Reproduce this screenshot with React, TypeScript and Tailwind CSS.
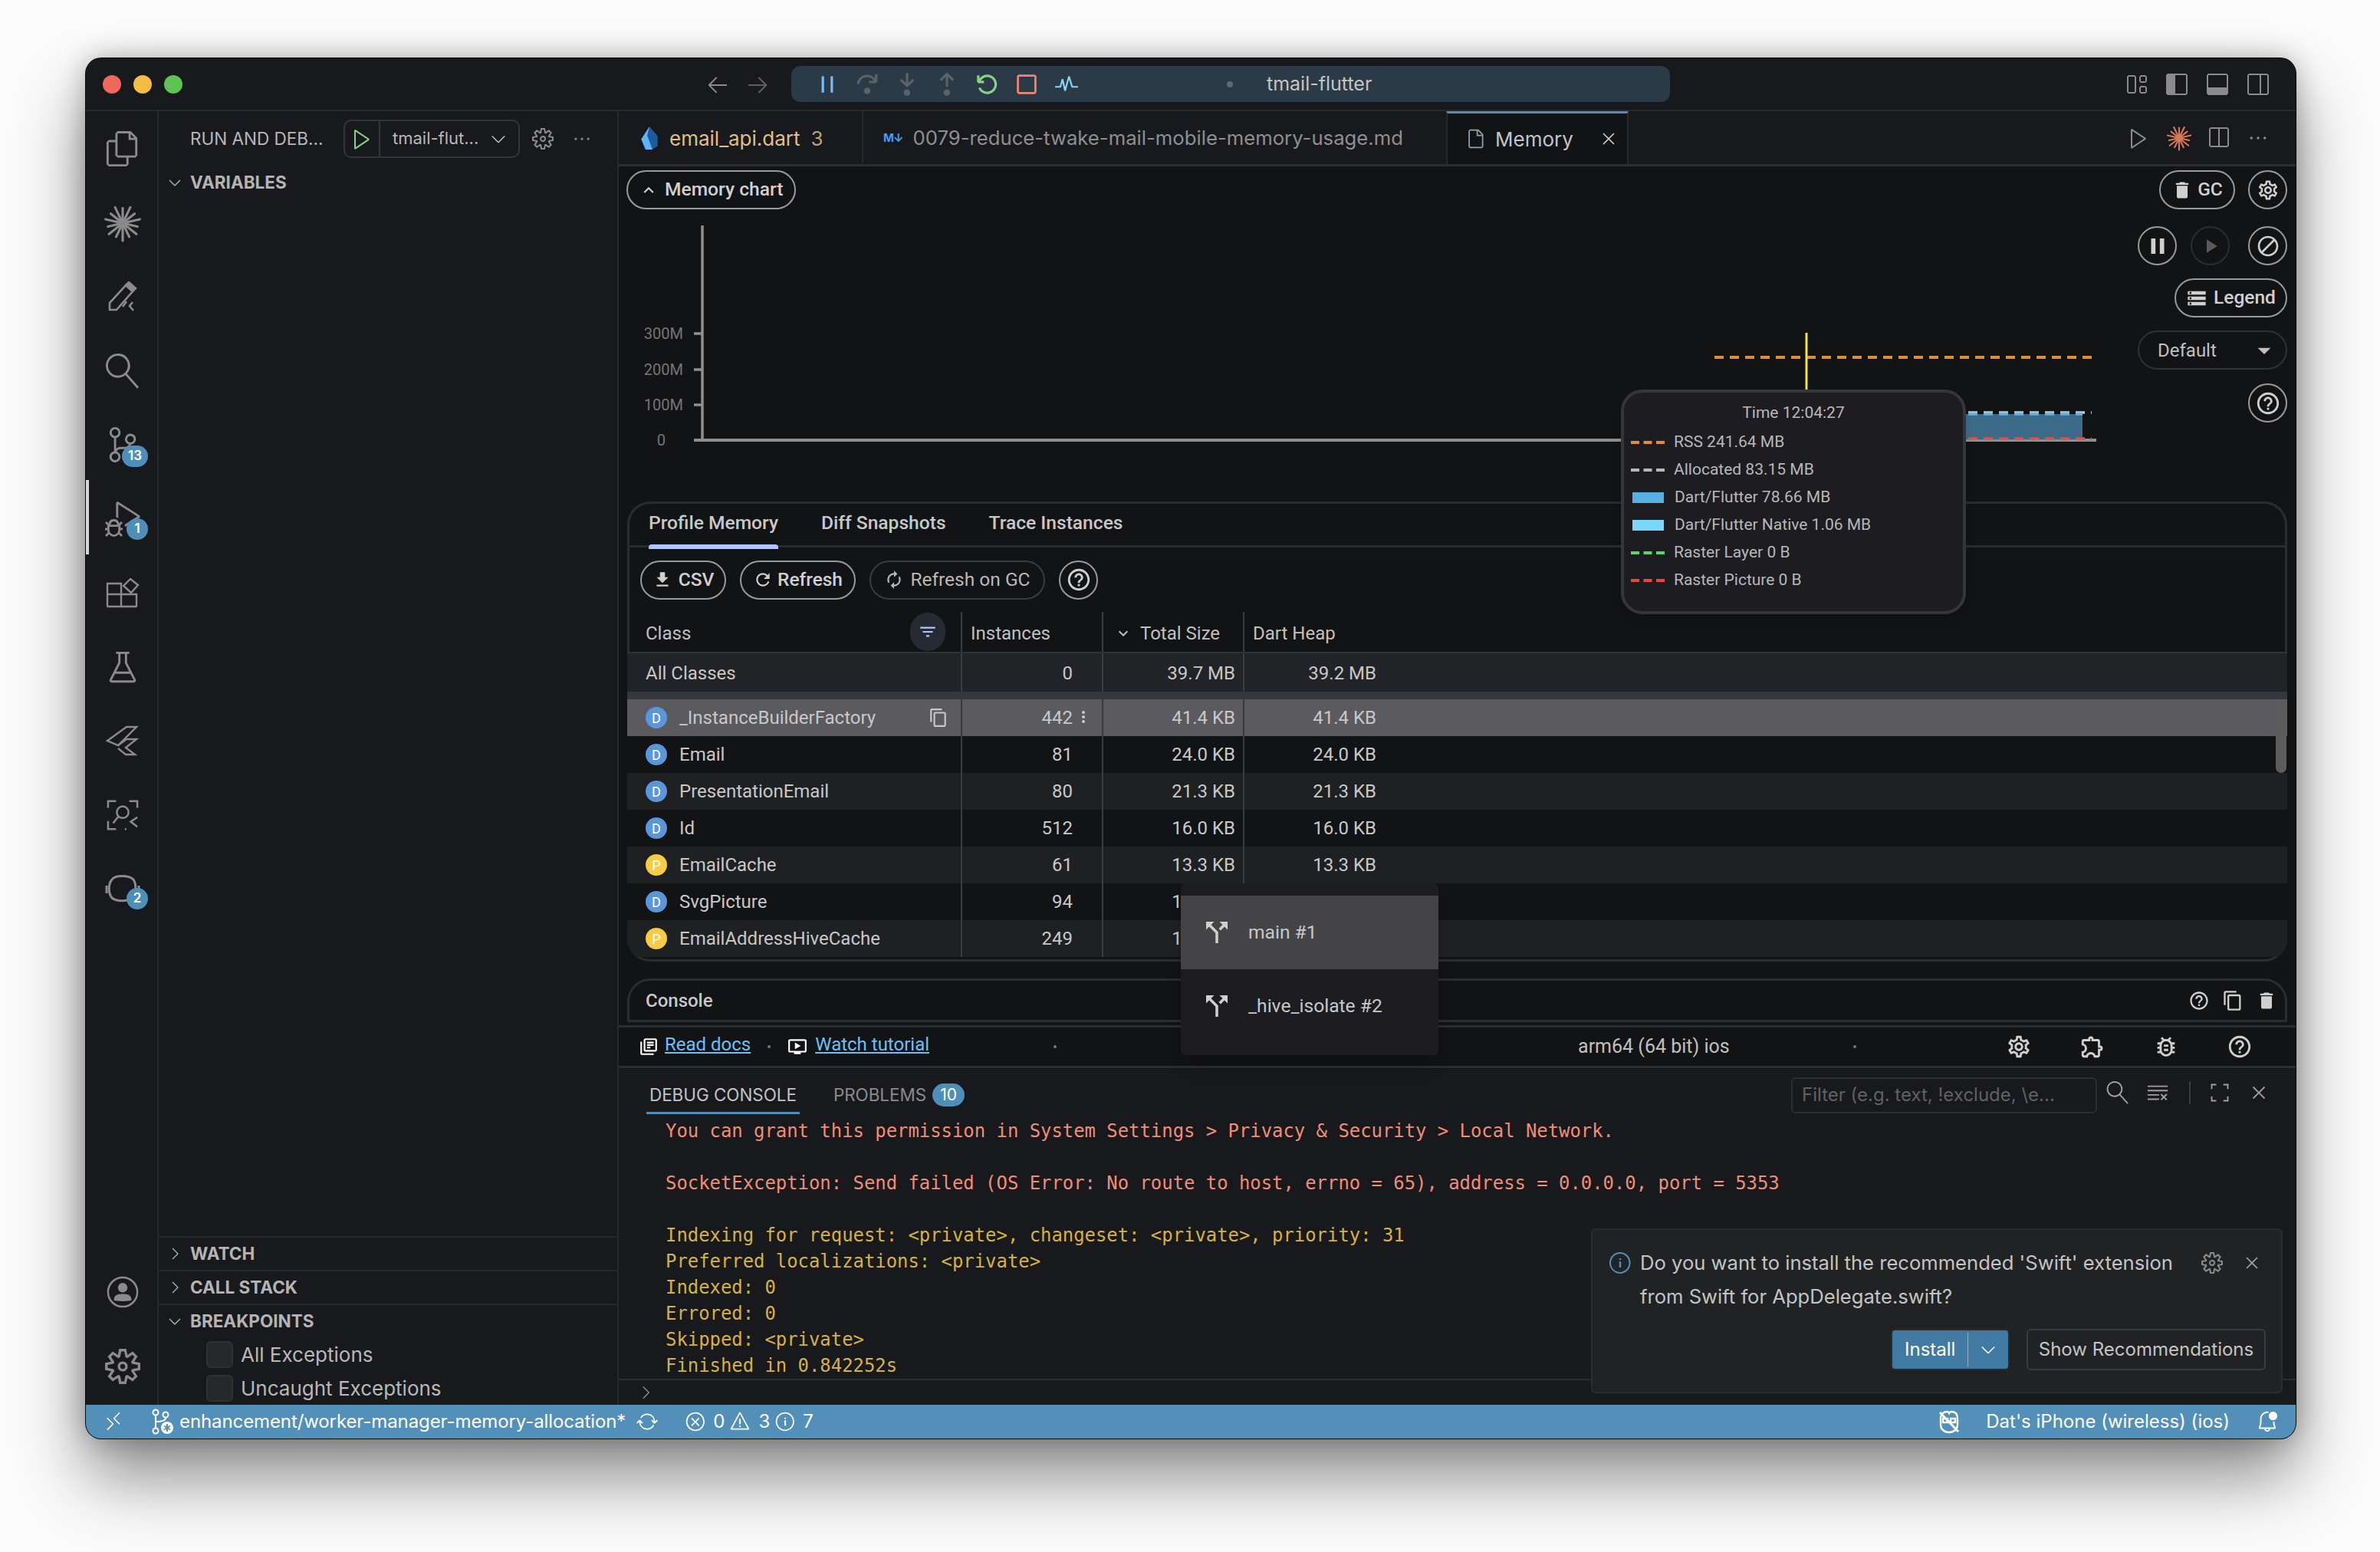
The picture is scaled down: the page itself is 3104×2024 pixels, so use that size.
import type { ReactNode } from 'react'
import {
  VscArrowLeft,
  VscArrowRight,
  VscBeaker,
  VscBellDot,
  VscChevronDown,
  VscChevronRight,
  VscClearAll,
  VscClose,
  VscDebugPause,
  VscDebugRestart,
  VscDebugStepInto,
  VscDebugStepOut,
  VscDebugStepOver,
  VscDebugStop,
  VscEllipsis,
  VscError,
  VscFile,
  VscFiles,
  VscInfo,
  VscLayout,
  VscLayoutPanel,
  VscLayoutSidebarLeft,
  VscLayoutSidebarRightOff,
  VscPlay,
  VscPulse,
  VscRemote,
  VscSearch,
  VscSettingsGear,
  VscSourceControl,
  VscSplitHorizontal,
  VscSync,
  VscWarning,
  VscDebugAlt,
} from 'react-icons/vsc'
import {
  MdArrowDropDown,
  MdAutorenew,
  MdBlock,
  MdCallSplit,
  MdContentCopy,
  MdDelete,
  MdFileDownload,
  MdFilterList,
  MdHelpOutline,
  MdKeyboardArrowDown,
  MdKeyboardArrowUp,
  MdMoreVert,
  MdOutlineBugReport,
  MdOutlineExtension,
  MdOutlineLibraryBooks,
  MdOutlineOndemandVideo,
  MdOutlineSettings,
  MdPause,
  MdPlayArrow,
  MdRefresh,
  MdStorage,
} from 'react-icons/md'

function Sparkle({ className }: { className?: string }) {
  const rays = Array.from({ length: 14 }, (_, i) => (i * 360) / 14)
  return (
    <svg viewBox="0 0 48 48" className={className}>
      {rays.map((deg, i) => (
        <line
          key={deg}
          x1="24"
          y1="24"
          x2="24"
          y2={i % 2 ? 2 : 5}
          stroke="currentColor"
          strokeWidth="3"
          strokeLinecap="round"
          transform={`rotate(${deg} 24 24)`}
        />
      ))}
    </svg>
  )
}

function DartLogo() {
  return (
    <svg viewBox="0 0 24 32" className="h-[31px] w-[24px]">
      <path d="M12 0 L23 13 L23 26 L16 31 L6 31 L1 17 Z" fill="#1f5a9e" />
      <path d="M1 17 L12 0 L9 12 L16 31 L7 31 Z" fill="#62b5f5" />
    </svg>
  )
}

function PencilRules() {
  return (
    <svg viewBox="0 0 40 40" className="h-[40px] w-[40px] text-[#8b8b8b]" fill="none" stroke="currentColor" strokeWidth="2.6">
      <path d="M3 37 L3 28 L24 5 L33 13 L12 37 Z" />
      <path d="M28 1 L37 9 L33 13 L24 5 Z" fill="currentColor" />
      <path d="M25 26 L20 33 M33 27 L29 32 L34 38" />
    </svg>
  )
}

function FlutterOutline() {
  return (
    <svg viewBox="0 0 44 40" className="h-[40px] w-[44px] text-[#8b8b8b]" fill="none" stroke="currentColor" strokeWidth="2.4">
      <path d="M2 20 L27 2 L40 2 L16 26 Z" />
      <path d="M16 26 L27 18 L40 18 L26 29 L38 38 L26 38 L16 30" />
    </svg>
  )
}

function ScanFace() {
  return (
    <svg viewBox="0 0 44 44" className="h-[42px] w-[42px] text-[#8b8b8b]" fill="none" stroke="currentColor" strokeWidth="2.6">
      <path d="M2 12 V3 H13 M31 3 H42 V12 M2 30 V41 H13 M25 41 H27" />
      <circle cx="22" cy="18" r="8" />
      <path d="M16 24 L9 33 M42 25 L33 31 L42 38" />
    </svg>
  )
}

function ChatIcon() {
  return (
    <svg viewBox="0 0 48 40" className="h-[40px] w-[48px] text-[#8b8b8b]" fill="none" stroke="currentColor" strokeWidth="3">
      <path d="M10 8 C14 2 32 2 38 8 C42 14 42 26 36 32 C30 37 16 37 10 32 C5 26 5 14 10 8 Z" />
      <path d="M3 16 V26 M45 16 V26" />
    </svg>
  )
}

function ExtensionsIcon() {
  return (
    <svg viewBox="0 0 44 40" className="h-[40px] w-[44px] text-[#8b8b8b]" fill="none" stroke="currentColor" strokeWidth="2.4">
      <path d="M2 8 H20 V38 H3 a1 1 0 0 1 -1 -1 Z" />
      <path d="M2 22 H40 V37 a1 1 0 0 1 -1 1 H20" />
      <path d="M32 2 L42 10 L33 20 L23 11 Z" />
    </svg>
  )
}

function AccountIcon() {
  return (
    <svg viewBox="0 0 44 44" className="h-[42px] w-[42px] text-[#8b8b8b]">
      <circle cx="22" cy="22" r="20" fill="none" stroke="currentColor" strokeWidth="2.6" />
      <circle cx="22" cy="16" r="6.5" fill="currentColor" />
      <path d="M10 33 C10 25 16 24.5 22 24.5 C28 24.5 34 25 34 33 C30 35 14 35 10 33 Z" fill="currentColor" />
    </svg>
  )
}

function BranchStar() {
  return (
    <svg viewBox="0 0 30 34" className="h-[34px] w-[30px] text-white" fill="none" stroke="currentColor" strokeWidth="2">
      <circle cx="6" cy="5" r="3.5" />
      <circle cx="6" cy="29" r="3.5" />
      <path d="M6 9 V25 M6 17 C12 17 19 16 19 12" />
      <circle cx="19" cy="8" r="3.5" />
      <circle cx="21" cy="25" r="8" fill="currentColor" stroke="none" />
      <path d="M21 20 V30 M17 22.5 L25 27.5 M25 22.5 L17 27.5" stroke="#528fb9" />
    </svg>
  )
}

function CopilotOff() {
  return (
    <svg viewBox="0 0 32 32" className="h-[32px] w-[32px] text-white" fill="none" stroke="currentColor" strokeWidth="2.4">
      <path d="M5 20 V12 C5 6 9 3 13 3 C15 3 16 5 16 5 C16 5 17 3 19 3 C24 3 27 6 27 12 V20 C27 26 22 30 16 30 C10 30 5 26 5 20 Z" />
      <path d="M8 12 H14 V17 H8 Z M18 12 H24 V17 H18 Z" />
      <path d="M4 4 L28 29" strokeWidth="3" />
    </svg>
  )
}

function ExpandIcon() {
  return (
    <svg viewBox="0 0 24 24" className="ml-[24px] h-[28px] w-[28px] text-[#a0a0a0]" fill="none" stroke="currentColor" strokeWidth="1.6">
      <path d="M3 8 V3 H8 M16 3 H21 V8 M3 16 V21 H8 M16 21 H21 V16" />
    </svg>
  )
}

function ActivityItem({ children, badge, wide }: { children: ReactNode; badge?: string; wide?: boolean }) {
  return (
    <div className="relative flex h-[96.5px] w-full shrink-0 items-center justify-center">
      {children}
      {badge && (
        <span
          className={`absolute flex h-[28px] items-center justify-center rounded-full bg-[#4e8fb9] text-[17px] font-semibold text-white ${
            wide ? 'left-[44px] top-[49px] w-[34px]' : 'left-[50px] top-[47px] w-[28px]'
          }`}
        >
          {badge}
        </span>
      )}
    </div>
  )
}

function ActivityBar() {
  const icon = 'h-[46px] w-[46px] text-[#8b8b8b]'
  return (
    <aside className="relative flex w-[95px] shrink-0 flex-col border-r-2 border-[#26282b] pl-[3px] pt-px">
      <span className="absolute left-0 top-[481px] h-[97px] w-[4px] bg-[#d8d8d8]" />
      <ActivityItem><VscFiles className={icon} /></ActivityItem>
      <ActivityItem><Sparkle className="h-[50px] w-[50px] text-[#8b8b8b]" /></ActivityItem>
      <ActivityItem><PencilRules /></ActivityItem>
      <ActivityItem><VscSearch className={`${icon} -scale-x-100`} /></ActivityItem>
      <ActivityItem badge="13" wide><VscSourceControl className={icon} /></ActivityItem>
      <ActivityItem badge="1"><VscDebugAlt className={icon} /></ActivityItem>
      <ActivityItem><ExtensionsIcon /></ActivityItem>
      <ActivityItem><VscBeaker className={icon} /></ActivityItem>
      <ActivityItem><FlutterOutline /></ActivityItem>
      <ActivityItem><ScanFace /></ActivityItem>
      <ActivityItem badge="2"><ChatIcon /></ActivityItem>
      <div className="mt-auto flex flex-col pb-[2px]">
        <ActivityItem><AccountIcon /></ActivityItem>
        <ActivityItem><VscSettingsGear className={icon} /></ActivityItem>
      </div>
    </aside>
  )
}

function SectionHeader({ label, open, border = true }: { label: string; open?: boolean; border?: boolean }) {
  return (
    <div className={`flex h-[44px] items-center text-[22.5px] font-bold text-[#b4b4b4] ${border ? 'border-t-2 border-[#26282b]' : ''}`}>
      <span className="flex w-[41px] justify-center">
        {open ? <VscChevronDown className="h-[24px] w-[24px]" /> : <VscChevronRight className="h-[24px] w-[24px]" />}
      </span>
      {label}
    </div>
  )
}

function SideBar() {
  return (
    <section className="flex w-[600px] shrink-0 flex-col border-r-2 border-[#26282b] text-[#b8b8b8]">
      <div className="flex h-[71px] items-center pl-[41px] text-[22.5px]">
        <span className="w-[200px] whitespace-nowrap">RUN AND DEB...</span>
        <div className="flex h-[50px] w-[230px] shrink-0 items-center rounded-[10px] border-2 border-[#333539]">
          <span className="flex h-full w-[46px] shrink-0 items-center justify-center border-r-2 border-[#333539]">
            <VscPlay className="h-[32px] w-[32px] text-[#89d185]" />
          </span>
          <span className="whitespace-nowrap pl-[16px] text-[22px]">tmail-flut...</span>
          <VscChevronDown className="ml-auto mr-[12px] h-[28px] w-[28px] shrink-0 text-[#c0c0c0]" />
        </div>
        <VscSettingsGear className="ml-[16px] h-[28px] w-[28px] text-[#8b8b8b]" />
        <VscEllipsis className="ml-[24px] h-[26px] w-[26px] text-[#8b8b8b]" />
      </div>
      <SectionHeader label="VARIABLES" open border={false} />
      <div className="flex-1" />
      <SectionHeader label="WATCH" />
      <SectionHeader label="CALL STACK" />
      <SectionHeader label="BREAKPOINTS" open />
      {['All Exceptions', 'Uncaught Exceptions'].map(label => (
        <div key={label} className="flex h-[44px] items-center pl-[62px] text-[26px]">
          <span className="mr-[10px] h-[35px] w-[35px] rounded-[6px] border-2 border-[#2f3134] bg-[#26282b]" />
          {label}
        </div>
      ))}
    </section>
  )
}

function TitleBar() {
  return (
    <header className="flex h-[69px] shrink-0 items-center border-b-2 border-[#26282b] pl-[22px]">
      <span className="h-[24px] w-[24px] rounded-full bg-[#f0685c]" />
      <span className="ml-[16px] h-[24px] w-[24px] rounded-full bg-[#f6bd46]" />
      <span className="ml-[16px] h-[24px] w-[24px] rounded-full bg-[#5ec454]" />
      <VscArrowLeft className="ml-[682px] h-[32px] w-[32px] text-[#8b8b8b]" />
      <VscArrowRight className="ml-[20px] h-[32px] w-[32px] text-[#5f5f5f]" />
      <div className="ml-[28px] flex h-[47px] w-[1146px] items-center rounded-[12px] bg-[#2a3a46] pl-[30px] text-[25px] text-[#c4c4c4]">
        <VscDebugPause className="h-[34px] w-[34px] text-[#75beff]" />
        <VscDebugStepOver className="ml-[18px] h-[34px] w-[34px] text-[#5c6266]" />
        <VscDebugStepInto className="ml-[18px] h-[34px] w-[34px] text-[#5c6266]" />
        <VscDebugStepOut className="ml-[18px] h-[34px] w-[34px] text-[#5c6266]" />
        <VscDebugRestart className="ml-[18px] h-[34px] w-[34px] text-[#89d185]" />
        <VscDebugStop className="ml-[18px] h-[34px] w-[34px] text-[#f48771]" />
        <VscPulse className="ml-[18px] h-[34px] w-[34px] text-[#8ad8f8]" />
        <span className="ml-[192px] h-[8px] w-[8px] rounded-full bg-[#5e6b75]" />
        <span className="ml-[44px]">tmail-flutter</span>
      </div>
      <VscLayout className="ml-auto h-[32px] w-[32px] text-[#8b8b8b]" />
      <VscLayoutSidebarLeft className="ml-[21px] h-[32px] w-[32px] text-[#8b8b8b]" />
      <VscLayoutPanel className="ml-[21px] h-[32px] w-[32px] text-[#8b8b8b]" />
      <VscLayoutSidebarRightOff className="ml-[21px] mr-[33px] h-[32px] w-[32px] text-[#8b8b8b]" />
    </header>
  )
}

function EditorTabs() {
  return (
    <div className="flex h-[72px] shrink-0 border-b-[3px] border-[#2b2d30] text-[26px]">
      <div className="flex w-[319px] items-center gap-[14px] border-r-2 border-[#26282b] pl-[28px] pt-[2px] text-[#e2bf85]">
        <DartLogo />
        <span>email_api.dart</span>
        <span className="text-[#bfa274]">3</span>
      </div>
      <div className="flex w-[760px] items-center gap-[10px] pl-[26px] pt-[2px] text-[#8f8f8f]">
        <span className="text-[15px] font-bold tracking-[-1px] text-[#4a9af0]">M↓</span>
        <span className="ml-[3px] text-[25.7px]">0079-reduce-twake-mail-mobile-memory-usage.md</span>
      </div>
      <div className="flex w-[238px] items-center border-x-2 border-t-[3px] border-x-[#26282b] border-t-[#4e8fb9] bg-[#121315] pl-[22px] text-[#c4c4c4]">
        <VscFile className="h-[28px] w-[28px] text-[#8ea3b0]" />
        <span className="ml-[12px]">Memory</span>
        <VscClose className="ml-auto mr-[10px] h-[28px] w-[28px]" />
      </div>
      <div className="ml-auto flex items-center pr-[35px] text-[#8b8b8b]">
        <VscPlay className="h-[32px] w-[32px]" />
        <Sparkle className="ml-[20px] h-[34px] w-[34px] text-[#d97757]" />
        <VscSplitHorizontal className="ml-[18px] h-[32px] w-[32px]" />
        <VscEllipsis className="ml-[22px] h-[28px] w-[28px]" />
      </div>
    </div>
  )
}

function CircleButton({ children, dim }: { children: ReactNode; dim?: boolean }) {
  return (
    <span className={`flex h-[51px] w-[51px] items-center justify-center rounded-full border-2 ${dim ? 'border-[#2b2d30] text-[#5a5a5a]' : 'border-[#9a9a9a] text-[#cfcfcf]'}`}>
      {children}
    </span>
  )
}

function Pill({ children, className = '', dim }: { children: ReactNode; className?: string; dim?: boolean }) {
  return (
    <span className={`flex h-[51px] items-center justify-center rounded-full border-2 text-[24.5px] ${dim ? 'border-[#3a3c3f] text-[#b8b8b8]' : 'border-[#9a9a9a] font-medium text-[#d0d0d0]'} ${className}`}>
      {children}
    </span>
  )
}

function MemoryChart() {
  const dashes = (y: number, x1: number, x2: number, color: string, w = 3.5) => (
    <line x1={x1} x2={x2} y1={y} y2={y} stroke={color} strokeWidth={w} strokeDasharray="12 8" />
  )
  return (
    <svg width="1933" height="374" viewBox="0 0 1933 374" className="mt-[7px] block">
      {[['300M', 155], ['200M', 202], ['100M', 248], ['0', 294]].map(([t, y]) => (
        <g key={t}>
          <text x={t === '0' ? 61 : 84} y={Number(y) + 7} textAnchor="end" fontSize="20" fill="#757575">{t}</text>
          <line x1="98" x2="110" y1={y} y2={y} stroke="#8f8f8f" strokeWidth="3.5" />
        </g>
      ))}
      <line x1="109" x2="109" y1="14" y2="296" stroke="#8f8f8f" strokeWidth="3.5" />
      <line x1="98" x2="1927" y1="294" y2="294" stroke="#8f8f8f" strokeWidth="4" />
      <rect x="1700" y="260" width="209" height="33" fill="#3b6b87" />
      {dashes(258, 1700, 1921, '#c8c8c8')}
      {dashes(260, 1700, 1909, '#5bb3e3')}
      {dashes(292, 1700, 1921, '#e0504a')}
      {dashes(186, 1429, 1921, '#e88a2e', 4)}
      <line x1="1549" x2="1549" y1="154" y2="240" stroke="#f5e33c" strokeWidth="3" />
    </svg>
  )
}

function ChartTooltip() {
  const rows = [
    { label: 'RSS 241.64 MB', color: '#e88a2e' },
    { label: 'Allocated 83.15 MB', color: '#b8b8b8' },
    { label: 'Dart/Flutter 78.66 MB', color: '#57b0e2', bar: true },
    { label: 'Dart/Flutter Native 1.06 MB', color: '#7bd8fb', bar: true },
    { label: 'Raster Layer 0 B', color: '#5fd663' },
    { label: 'Raster Picture 0 B', color: '#e8483f' },
  ]
  return (
    <div className="absolute left-[1307px] top-[291px] h-[293px] w-[450px] rounded-[28px] border-4 border-[#35363a] bg-[#1c1c21] px-[9px] pt-[9px] text-[21px] text-[#b8b8b8] shadow-lg">
      <div className="mb-[2px] flex h-[36px] items-center justify-center">Time 12:04:27</div>
      {rows.map(row => (
        <div key={row.label} className="flex h-[36px] items-center">
          {row.bar ? (
            <span className="ml-[2px] mr-[14px] h-[14px] w-[41px]" style={{ backgroundColor: row.color }} />
          ) : (
            <svg width="44" height="6" className="mr-[12px]">
              <line x1="0" x2="44" y1="3" y2="3" stroke={row.color} strokeWidth="4" strokeDasharray="11 5.5" />
            </svg>
          )}
          {row.label}
        </div>
      ))}
    </div>
  )
}

const classRows = [
  { kind: 'D', name: '_InstanceBuilderFactory', count: '442', total: '41.4 KB', heap: '41.4 KB' },
  { kind: 'D', name: 'Email', count: '81', total: '24.0 KB', heap: '24.0 KB' },
  { kind: 'D', name: 'PresentationEmail', count: '80', total: '21.3 KB', heap: '21.3 KB' },
  { kind: 'D', name: 'Id', count: '512', total: '16.0 KB', heap: '16.0 KB' },
  { kind: 'P', name: 'EmailCache', count: '61', total: '13.3 KB', heap: '13.3 KB' },
  { kind: 'D', name: 'SvgPicture', count: '94', total: '11.3 KB', heap: '11.3 KB' },
  { kind: 'P', name: 'EmailAddressHiveCache', count: '249', total: '10.0 KB', heap: '10.0 KB' },
]

function ClassRow({ row, index }: { row: (typeof classRows)[number]; index: number }) {
  const selected = index === 0
  const bg = selected ? 'bg-[#5a5a5f]' : index % 2 === 0 ? 'bg-[#1f2022]' : 'bg-[#121315]'
  return (
    <div className={`flex h-[48px] items-center text-[24px] text-[#c8c8c8] ${bg}`}>
      <div className="flex h-full w-[437px] shrink-0 items-center border-r-2 border-[#3a3c3f] pl-[24px]">
        <span className={`flex h-[28px] w-[28px] items-center justify-center rounded-full text-[18px] text-white ${row.kind === 'D' ? 'bg-[#5a96dc]' : 'bg-[#f8cb45]'}`}>
          {row.kind}
        </span>
        <span className="ml-[16px]">{row.name}</span>
        {selected && <MdContentCopy className="ml-auto mr-[16px] h-[26px] w-[26px]" />}
      </div>
      <div className="flex h-full w-[184px] shrink-0 items-center justify-end border-r-2 border-[#3a3c3f] pr-[38px]">
        <span className="relative">
          {row.count}
          {selected && <MdMoreVert className="absolute left-full top-[5px] ml-[2px] h-[24px] w-[24px]" />}
        </span>
      </div>
      <div className="flex h-full w-[184px] shrink-0 items-center justify-end border-r-2 border-[#3a3c3f] pr-[10px]">{row.total}</div>
      <div className="flex h-full w-[172px] shrink-0 items-center justify-end">{row.heap}</div>
    </div>
  )
}

function ProfileTable() {
  return (
    <div className="relative flex-1 overflow-hidden">
      <div className="flex h-[54px] items-center border-b-2 border-[#2f3134] text-[24px] text-[#c0c0c0]">
        <div className="flex h-full w-[437px] shrink-0 items-center border-r-2 border-[#3a3c3f] pl-[24px] pt-[3px]">
          Class
          <span className="ml-auto mr-[20px] -mt-[3px] flex h-[50px] w-[46px] items-center justify-center rounded-full bg-[#262a33]">
            <MdFilterList className="h-[26px] w-[26px] text-[#aec6ff]" />
          </span>
        </div>
        <div className="flex h-full w-[184px] shrink-0 items-center border-r-2 border-[#3a3c3f] pl-[11px] pt-[3px]">Instances</div>
        <div className="flex h-full w-[184px] shrink-0 items-center border-r-2 border-[#3a3c3f] pl-[14px] pt-[3px]">
          <MdKeyboardArrowDown className="mr-[10px] h-[24px] w-[24px]" />
          Total Size
        </div>
        <div className="pl-[11px] pt-[3px]">Dart Heap</div>
      </div>
      <div className="flex h-[50px] items-center bg-[#212326] text-[24px] text-[#c8c8c8]">
        <div className="flex h-full w-[437px] shrink-0 items-center border-r-2 border-[#3a3c3f] pl-[24px] pt-[2px]">All Classes</div>
        <div className="flex h-full w-[184px] shrink-0 items-center justify-end border-r-2 border-[#3a3c3f] pr-[38px] pt-[2px]">0</div>
        <div className="flex h-full w-[184px] shrink-0 items-center justify-end border-r-2 border-[#3a3c3f] pr-[10px] pt-[2px]">39.7 MB</div>
        <div className="flex h-full w-[172px] shrink-0 items-center justify-end pt-[2px]">39.2 MB</div>
      </div>
      <div className="h-[10px] bg-[#34373b]" />
      {classRows.map((row, i) => (
        <ClassRow key={row.name} row={row} index={i} />
      ))}
      <span className="absolute right-[1px] top-[114px] h-[96px] w-[14px] rounded-full bg-[#5c5c5c]" />
    </div>
  )
}

function ProfilePanel() {
  return (
    <div className="mx-[11px] flex h-[600px] flex-col overflow-hidden rounded-[30px] pb-[6px] pt-[3px] shadow-[inset_0_0_0_3px_#2a2c2f]">
      <div className="flex h-[57px] shrink-0 items-center gap-[56px] border-b-[3px] border-[#2a2c2f] pb-[4px] pl-[28px] text-[24.6px] font-medium text-[#c8c8c8]">
        <span className="relative">
          Profile Memory
          <span className="absolute -bottom-[16px] left-0 h-[6px] w-full rounded-t-[4px] bg-[#aec6ff]" />
        </span>
        <span>Diff Snapshots</span>
        <span>Trace Instances</span>
      </div>
      <div className="flex h-[84px] shrink-0 items-center pl-[17px]">
        <Pill className="w-[112px] gap-[8px]"><MdFileDownload className="h-[26px] w-[26px]" />CSV</Pill>
        <Pill className="ml-[18px] w-[151px] gap-[6px]"><MdRefresh className="h-[26px] w-[26px]" />Refresh</Pill>
        <Pill dim className="ml-[18px] w-[229px] gap-[8px]"><MdAutorenew className="h-[26px] w-[26px]" />Refresh on GC</Pill>
        <span className="ml-[18px]"><CircleButton><MdHelpOutline className="h-[34px] w-[34px]" /></CircleButton></span>
      </div>
      <ProfileTable />
    </div>
  )
}

function ThreadMenu() {
  const item = (label: string, active?: boolean) => (
    <div className={`flex h-[96px] items-center pl-[26px] text-[24.6px] text-[#c8c8c8] ${active ? 'bg-[#444446]' : ''}`}>
      <MdCallSplit className="h-[42px] w-[42px] text-[#d0d0d0]" />
      <span className="ml-[20px]">{label}</span>
    </div>
  )
  return (
    <div className="absolute left-[733px] top-[935px] z-10 h-[224px] w-[336px] rounded-[6px] bg-[#1c1c21] pt-[16px] shadow-xl">
      {item('main #1', true)}
      {item('_hive_isolate #2')}
    </div>
  )
}

function MemoryFooter() {
  return (
    <div className="flex h-[56px] shrink-0 items-center border-y-[3px] border-[#2b2d30] text-[24px]">
      <MdOutlineLibraryBooks className="ml-[26px] h-[26px] w-[26px] text-white" />
      <span className="mb-[6px] ml-[8px] text-[#6cc0f5] underline underline-offset-2">Read docs</span>
      <span className="ml-[22px] h-[4px] w-[4px] rounded-full bg-[#777]" />
      <MdOutlineOndemandVideo className="ml-[22px] h-[26px] w-[26px] text-white" />
      <span className="mb-[6px] ml-[10px] text-[#6cc0f5] underline underline-offset-2">Watch tutorial</span>
      <span className="ml-[162px] h-[4px] w-[4px] rounded-full bg-[#777]" />
      <span className="ml-[680px] text-[25px] text-[#c0c0c0]">arm64 (64 bit) ios</span>
      <span className="ml-[161px] h-[4px] w-[4px] rounded-full bg-[#777]" />
      <div className="ml-auto flex items-center gap-[62px] pr-[56px] text-[#d0d0d0]">
        <MdOutlineSettings className="h-[34px] w-[34px]" />
        <MdOutlineExtension className="h-[34px] w-[34px]" />
        <MdOutlineBugReport className="h-[34px] w-[34px]" />
        <MdHelpOutline className="h-[34px] w-[34px]" />
      </div>
    </div>
  )
}

function MemoryView() {
  return (
    <div className="relative flex h-[1177px] shrink-0 flex-col bg-[#121315] font-[Roboto,sans-serif]">
      <div className="flex h-[437px] shrink-0">
        <div className="flex-1">
          <span className="ml-[10px] mt-[5px] flex h-[51px] w-[221px] items-center gap-[8px] rounded-full border-2 border-[#9a9a9a] pl-[14px] text-[24.6px] font-medium text-[#d0d0d0]">
            <MdKeyboardArrowUp className="h-[26px] w-[26px]" />
            Memory chart
          </span>
          <MemoryChart />
        </div>
        <div className="flex w-[240px] flex-col items-end pr-[11px] pt-[5px]">
          <div className="flex items-center gap-[17px]">
            <Pill className="w-[99px] gap-[6px]"><MdDelete className="h-[28px] w-[28px]" />GC</Pill>
            <CircleButton><MdOutlineSettings className="h-[30px] w-[30px]" /></CircleButton>
          </div>
          <div className="mt-[22px] flex items-center gap-[18px]">
            <CircleButton><MdPause className="h-[34px] w-[34px]" /></CircleButton>
            <CircleButton dim><MdPlayArrow className="h-[30px] w-[30px]" /></CircleButton>
            <span className="ml-[6px]"><CircleButton><MdBlock className="h-[32px] w-[32px]" /></CircleButton></span>
          </div>
          <Pill className="mt-[17px] w-[147px] gap-[8px]"><MdStorage className="h-[28px] w-[28px]" />Legend</Pill>
          <span className="mt-[17px] flex h-[51px] w-[195px] items-center rounded-full border-2 border-[#2f3134] pl-[24px] text-[24px] text-[#c0c0c0]">
            Default
            <MdArrowDropDown className="ml-auto mr-[8px] h-[40px] w-[40px]" />
          </span>
          <span className="mt-[18px]"><CircleButton><MdHelpOutline className="h-[34px] w-[34px]" /></CircleButton></span>
        </div>
      </div>
      <ProfilePanel />
      <div className="mx-[11px] mt-[22px] flex h-[57px] shrink-0 items-center rounded-t-[30px] border-[3px] border-[#2a2c2f] pl-[21px] pr-[10px] text-[24px] font-medium text-[#c8c8c8]">
        Console
        <div className="ml-auto flex items-center gap-[16px] text-[#cfcfcf]">
          <MdHelpOutline className="h-[28px] w-[28px]" />
          <MdContentCopy className="h-[28px] w-[28px]" />
          <MdDelete className="h-[28px] w-[28px]" />
        </div>
      </div>
      <div className="h-[4px] shrink-0" />
      <MemoryFooter />
      <ChartTooltip />
      <ThreadMenu />
    </div>
  )
}

const consoleLines = [
  { text: 'You can grant this permission in System Settings > Privacy & Security > Local Network.', tone: 'err' },
  { text: '', tone: 'err' },
  { text: 'SocketException: Send failed (OS Error: No route to host, errno = 65), address = 0.0.0.0, port = 5353', tone: 'err' },
  { text: '', tone: 'err' },
  { text: 'Indexing for request: <private>, changeset: <private>, priority: 31', tone: 'warn' },
  { text: 'Preferred localizations: <private>', tone: 'warn' },
  { text: 'Indexed: 0', tone: 'warn' },
  { text: 'Errored: 0', tone: 'warn' },
  { text: 'Skipped: <private>', tone: 'warn' },
  { text: 'Finished in 0.842252s', tone: 'warn' },
]

function DebugPanel() {
  return (
    <div className="relative flex min-h-0 flex-1 flex-col text-[22.4px]">
      <div className="flex h-[62px] shrink-0 items-center pl-[40px] pr-[33px]">
        <span className="relative mt-[6px] text-[#c4c4c4]">
          DEBUG CONSOLE
          <span className="absolute -bottom-[8px] left-[-4px] right-[-4px] h-[3px] bg-[#4e8fb9]" />
        </span>
        <span className="ml-[48px] mt-[6px] text-[#8b8b8b]">PROBLEMS</span>
        <span className="ml-[8px] mt-[6px] flex h-[30px] w-[42px] items-center justify-center rounded-full bg-[#4e8fb9] text-[21px] text-white">10</span>
        <div className="ml-auto mt-[6px] flex h-[47px] w-[399px] items-center rounded-[6px] border-2 border-[#2b2d30] px-[12px] text-[24px] text-[#5f6163]">
          Filter (e.g. text, !exclude, \e...
        </div>
        <VscSearch className="ml-[12px] h-[30px] w-[30px] -scale-x-100 text-[#a0a0a0]" />
        <VscClearAll className="ml-[22px] h-[30px] w-[30px] text-[#a0a0a0]" />
        <span className="ml-[26px] h-[30px] w-[2px] bg-[#3a3c3f]" />
        <ExpandIcon />
        <VscClose className="ml-[22px] h-[30px] w-[30px] text-[#a0a0a0]" />
      </div>
      <div className="flex-1 overflow-hidden pl-[61px] pt-[2px] font-['DejaVu_Sans_Mono',monospace] text-[23.9px] leading-[34px]">
        {consoleLines.map((line, i) => (
          <div key={i} className={`h-[34px] whitespace-pre ${line.tone === 'err' ? 'text-[#f08d75]' : 'text-[#d6b23f]'}`}>
            {line.text}
          </div>
        ))}
      </div>
      <div className="flex h-[34px] shrink-0 items-center border-t-2 border-[#2b2d30] pl-[22px]">
        <VscChevronRight className="h-[26px] w-[26px] text-[#8b8b8b]" />
      </div>
      <Notification />
    </div>
  )
}

function Notification() {
  return (
    <div className="absolute bottom-[15px] right-[17px] h-[215px] w-[902px] rounded-[6px] border-2 border-[#2a2c2e] bg-[#202224] pl-[20px] pr-[20px] pt-[21px] text-[25.6px] text-[#c4c4c4]">
      <div className="flex h-[44px] items-center">
        <VscInfo className="h-[32px] w-[32px] text-[#4e8fb9]" />
        <span className="ml-[10px]">Do you want to install the recommended 'Swift' extension</span>
        <VscSettingsGear className="ml-auto h-[28px] w-[28px] text-[#8b8b8b]" />
        <VscClose className="ml-[24px] mr-[4px] h-[28px] w-[28px] text-[#a0a0a0]" />
      </div>
      <div className="flex h-[44px] items-center pl-[42px]">from Swift for AppDelegate.swift?</div>
      <div className="mt-[20px] flex items-center justify-end text-[24px]">
        <div className="flex h-[54px] w-[155px] items-center rounded-[6px] border-2 border-[#2a2c2e] bg-[#417aa2] text-white">
          <span className="pl-[16px]">Install</span>
          <span className="ml-[16px] h-[44px] w-[1px] bg-[#8fb4cc]" />
          <VscChevronDown className="ml-[12px] h-[28px] w-[28px]" />
        </div>
        <div className="ml-[22px] flex h-[54px] w-[312px] items-center justify-center rounded-[6px] border-2 border-[#3a3c3f]">Show Recommendations</div>
      </div>
    </div>
  )
}

function StatusBar() {
  return (
    <footer className="flex h-[44px] shrink-0 items-center bg-[#528fb9] text-[24px] text-white">
      <VscRemote className="ml-[22px] h-[28px] w-[28px]" />
      <span className="ml-[35px]"><BranchStar /></span>
      <span className="ml-[7px] whitespace-nowrap tracking-[-0.1px]">enhancement/worker-manager-memory-allocation*</span>
      <VscSync className="ml-[14px] h-[28px] w-[28px]" />
      <VscError className="ml-[35px] h-[28px] w-[28px]" />
      <span className="ml-[9px]">0</span>
      <VscWarning className="ml-[6px] h-[28px] w-[28px]" />
      <span className="ml-[10px]">3</span>
      <VscInfo className="ml-[6px] h-[28px] w-[28px]" />
      <span className="ml-[9px]">7</span>
      <span className="ml-auto flex items-center">
        <CopilotOff />
        <span className="ml-[32px]">Dat's iPhone (wireless) (ios)</span>
        <VscBellDot className="ml-[34px] mr-[22px] h-[30px] w-[30px]" />
      </span>
    </footer>
  )
}

export default function App() {
  return (
    <div className="h-[2024px] w-[3104px] bg-[#fbfbfb] pl-[112px] pt-[76px] font-[Inter,sans-serif]">
      <div className="flex h-[1800px] w-[2882px] flex-col overflow-hidden rounded-[20px] bg-[#18191c] shadow-[0_0_0_1px_#0a0a0a,0_50px_90px_rgba(0,0,0,0.45),0_0_36px_rgba(0,0,0,0.28)]">
        <TitleBar />
        <div className="flex min-h-0 flex-1">
          <ActivityBar />
          <SideBar />
          <main className="flex min-w-0 flex-1 flex-col">
            <EditorTabs />
            <MemoryView />
            <DebugPanel />
          </main>
        </div>
        <StatusBar />
      </div>
    </div>
  )
}
